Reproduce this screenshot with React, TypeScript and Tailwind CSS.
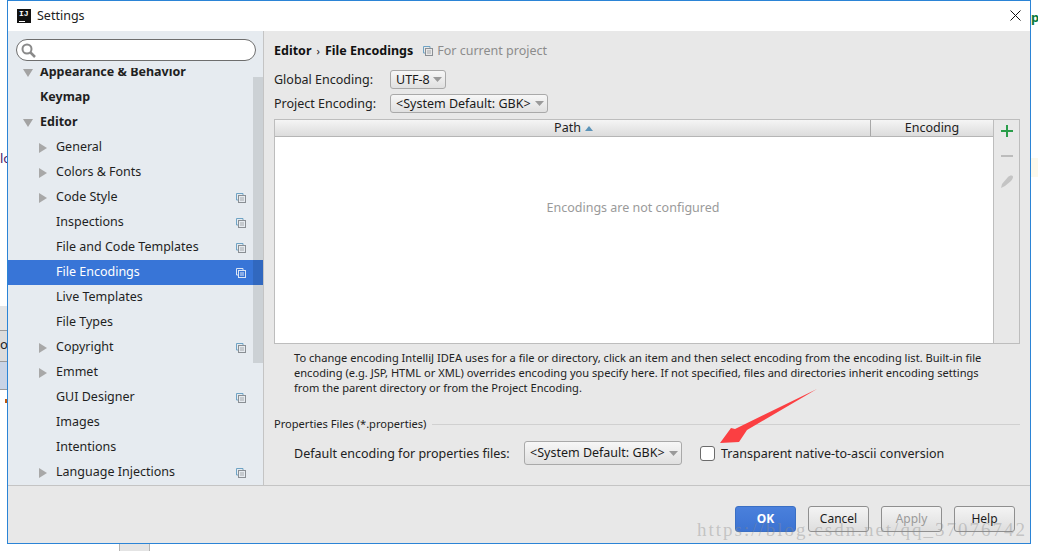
const items = [
  { label: 'General', arrow: true },
  { label: 'Colors & Fonts', arrow: true },
  { label: 'Code Style', arrow: true, copy: true },
  { label: 'Inspections', copy: true },
  { label: 'File and Code Templates', copy: true },
  { label: 'File Encodings', copy: true, active: true },
  { label: 'Live Templates' },
  { label: 'File Types' },
  { label: 'Copyright', arrow: true, copy: true },
  { label: 'Emmet', arrow: true },
  { label: 'GUI Designer', copy: true },
  { label: 'Images' },
  { label: 'Intentions' },
  { label: 'Language Injections', arrow: true, copy: true },
]

function CopyIcon({ active, className = '' }: { active?: boolean; className?: string }) {
  const c = active ? '#dce6f5' : '#6fa3c4'
  return (
    <svg width="10" height="10" viewBox="0 0 10 10" className={className}>
      <path d="M0.5 0.5h6.500v2M0.500 0.500v6.500h2" fill="none" stroke={c} />
      <rect x="2.500" y="2.500" width="7" height="7" fill="none" stroke={active ? c : '#8a8f94'} />
      <path d="M4 5h4M4 7h4" stroke={active ? c : '#a5a9ad'} />
    </svg>
  )
}

function Combo({ label, className = '' }: { label: string; className?: string }) {
  return (
    <div className={`flex items-center justify-between rounded-[3px] border border-[#a9a9a9] bg-gradient-to-b from-[#f7f7f7] to-[#e0e0e0] pl-[5px] pr-[3px] text-[12.5px] text-[#1a1a1a] ${className}`}>
      <span className="whitespace-nowrap pt-[1px]">{label}</span>
      <svg width="9" height="5" viewBox="0 0 9 5" className="shrink-0">
        <path d="M0 0h9L4.500 5z" fill="#9a9a9a" />
      </svg>
    </div>
  )
}

function DialogButton({ label, disabled, primary }: { label: string; disabled?: boolean; primary?: boolean }) {
  if (primary) {
    return (
      <div className="flex h-[26px] w-[61px] items-center justify-center rounded-[3px] border border-[#3a6fc4] bg-gradient-to-b from-[#4a80dc] to-[#3c73d2] text-[12px] font-bold text-white">
        {label}
      </div>
    )
  }
  return (
    <div className={`flex h-[26px] w-[61px] items-center justify-center rounded-[3px] border border-[#8f8f8f] bg-gradient-to-b from-[#f4f4f4] to-[#dedede] text-[12px] ${disabled ? 'text-[#9a9a9a]' : 'text-[#1a1a1a]'}`}>
      {label}
    </div>
  )
}

export default function App() {
  return (
    <div className="relative h-[551px] w-[1038px] overflow-hidden bg-white font-['Noto_Sans',sans-serif]">
      {/* bits of the IDE window behind the dialog */}
      <div className="absolute left-0 top-[151px] text-[13px] leading-[14px] text-[#4a1a6a]">lo</div>
      <div className="absolute left-0 top-[306px] h-[24px] w-[8px] bg-[#e4e4e4]"></div>
      <div className="absolute left-0 top-[330px] h-[32px] w-[8px] border-y border-[#9a9a9a] bg-[#dcdcdc] text-[13px] leading-[26px] text-[#222]">o</div>
      <div className="absolute left-0 top-[362px] h-[28px] w-[8px] border-b border-[#9a9a9a] bg-[#c9d4e6]"></div>
      <div className="absolute left-[5px] top-[399px] h-[4px] w-[2px] bg-[#c05a10]"></div>
      <div className="absolute bottom-0 left-[119px] h-[7px] w-[31px] border-x border-[#b5b5b5] bg-[#e4e4e4]"></div>
      <div className="absolute left-[1031px] top-[10px] text-[13px] font-bold leading-[14px] text-[#0a7a3a]">p.</div>
      <div className="absolute left-[1031px] top-[158px] h-[19px] w-[7px] bg-[#fdf9ec]"></div>

      <div className="absolute left-[7px] top-0 flex h-[544px] w-[1024px] flex-col border border-[#2b84d6] bg-[#e8e8e8]">
        <div className="flex h-[30px] shrink-0 items-center bg-white pl-[9px] pr-[9px]">
          <div className="relative h-[14px] w-[14px] bg-[#111]">
            <span className="absolute left-[2px] top-[1px] font-['Liberation_Mono',monospace] text-[8px] font-bold leading-[8px] text-white">IJ</span>
            <span className="absolute bottom-[1px] left-[2px] h-px w-[6px] bg-white"></span>
          </div>
          <span className="ml-[6px] text-[12.5px] text-[#222]">Settings</span>
          <svg width="11" height="11" viewBox="0 0 11 11" className="ml-auto mb-[2px]">
            <path d="M0.500 0.500l10 10M10.500 0.500l-10 10" stroke="#111" strokeWidth="1" fill="none" />
          </svg>
        </div>

        <div className="flex min-h-0 flex-1 border-b border-[#c4c4c4]">
          <aside className="flex w-[256px] shrink-0 flex-col border-r border-[#c4c4c4] bg-[#e6ebf0]">
            <div className="px-[8px] pb-[7px] pt-[8px]">
              <div className="flex h-[22px] w-[240px] items-center rounded-full border border-[#6e6e6e] bg-white pl-[4px]">
                <svg width="15" height="15" viewBox="0 0 15 15">
                  <circle cx="6" cy="6" r="4.500" fill="none" stroke="#8a8a8a" strokeWidth="2" />
                  <path d="M9.500 9.500l4.500 4.500" stroke="#8a8a8a" strokeWidth="2.500" />
                </svg>
              </div>
            </div>
            <div className="relative min-h-0 flex-1 overflow-hidden">
              <div className="-mt-[8px] text-[12.5px] text-[#1f1f1f]">
                <div className="flex h-[25px] items-center pl-[15px] font-bold">
                  <svg width="10" height="8" viewBox="0 0 10 8" className="mr-[7px]">
                    <path d="M0 0h10L5 8z" fill="#a3a3a3" />
                  </svg>
                  Appearance &amp; Behavior
                </div>
                <div className="flex h-[25px] items-center pl-[32px] font-bold">Keymap</div>
                <div className="flex h-[25px] items-center pl-[15px] font-bold">
                  <svg width="10" height="8" viewBox="0 0 10 8" className="mr-[7px]">
                    <path d="M0 0h10L5 8z" fill="#a3a3a3" />
                  </svg>
                  Editor
                </div>
                {items.map(item => (
                  <div key={item.label} className={`relative flex h-[25px] items-center pl-[31px] pr-[17px] ${item.active ? 'bg-[#3875d7] text-white' : ''}`}>
                    {item.arrow && (
                      <svg width="8" height="10" viewBox="0 0 8 10" className="absolute left-[31px]">
                        <path d="M0 0v10l8-5z" fill="#a8a8a8" />
                      </svg>
                    )}
                    <span className="ml-[17px] whitespace-nowrap">{item.label}</span>
                    {item.copy && <CopyIcon active={item.active} className="ml-auto" />}
                  </div>
                ))}
              </div>
              <div className="absolute right-0 top-[9px] h-[286px] w-[10px] bg-black/[0.11]"></div>
            </div>
          </aside>

          <main className="flex min-w-0 flex-1 flex-col pl-[10px] pr-[10px] text-[12.5px] text-[#222]">
            <div className="mt-[11px] flex h-[18px] items-center">
              <span className="font-bold text-[#111]">Editor</span>
              <span className="mx-[5px] text-[11px]">›</span>
              <span className="font-bold text-[#111]">File Encodings</span>
              <CopyIcon className="ml-[10px]" />
              <span className="ml-[4px] text-[#8c8c8c]">For current project</span>
            </div>
            <div className="mt-[10px] flex h-[19px] items-center">
              <span className="w-[116px] pt-[2px]">Global Encoding:</span>
              <Combo label="UTF-8" className="h-[19px] w-[56px]" />
            </div>
            <div className="mt-[5px] flex h-[19px] items-center">
              <span className="w-[116px] pt-[2px]">Project Encoding:</span>
              <Combo label="<System Default: GBK>" className="h-[19px] w-[158px]" />
            </div>

            <div className="mt-[6px] flex h-[225px] shrink-0">
              <div className="flex w-[720px] flex-col border border-[#bdbdbd] bg-white">
                <div className="flex h-[17px] shrink-0 border-b border-[#b5b5b5] bg-gradient-to-b from-[#f5f5f5] to-[#dcdcdc] leading-[16px]">
                  <div className="flex flex-1 items-center justify-center pl-[2px]">
                    Path
                    <svg width="8" height="5" viewBox="0 0 8 5" className="ml-[4px]">
                      <path d="M4 0l4 5H0z" fill="#5b93b8" />
                    </svg>
                  </div>
                  <div className="flex w-[123px] items-center justify-center border-l border-[#a8a8a8]">Encoding</div>
                </div>
                <div className="flex flex-1 justify-center pr-[2px] pt-[61px] leading-[20px] text-[#9a9a9a]">Encodings are not configured</div>
              </div>
              <div className="flex w-[26px] flex-col items-center border-y border-r border-[#bdbdbd] pt-[5px]">
                <svg width="12" height="12" viewBox="0 0 12 12">
                  <path d="M6 0v12M0 6h12" stroke="#2a9d4a" strokeWidth="2" />
                </svg>
                <svg width="12" height="2" viewBox="0 0 12 2" className="mt-[18px]">
                  <path d="M0 1h12" stroke="#bcbcbc" strokeWidth="2" />
                </svg>
                <svg width="12" height="13" viewBox="0 0 12 13" className="mt-[18px]">
                  <path d="M0 13l1-4 6-7c2-2 5-2 5 0 0 1-1 3-2 4l-6 5z" fill="#c4c4c4" />
                </svg>
              </div>
            </div>

            <p className="mt-[6px] w-[730px] pl-[20px] text-[11.1px] leading-[15px] text-[#222]">
              To change encoding IntelliJ IDEA uses for a file or directory, click an item and then select encoding from the encoding list. Built-in file encoding (e.g. JSP, HTML or XML) overrides encoding you specify here. If not specified, files and directories inherit encoding settings from the parent directory or from the Project Encoding.
            </p>

            <div className="mt-[21px] flex items-center text-[11.1px] leading-[16px]">
              <span>Properties Files (*.properties)</span>
              <div className="ml-[6px] h-px flex-1 bg-[#d0d0d0]"></div>
            </div>
            <div className="mt-[9px] flex h-[24px] items-center pl-[20px]">
              <span className="w-[230px] pt-[2px]">Default encoding for properties files:</span>
              <Combo label="<System Default: GBK>" className="h-[24px] w-[158px]" />
              <div className="ml-[18px] h-[15px] w-[15px] rounded-[3px] border border-[#6b6b6b] bg-white"></div>
              <span className="ml-[6px] pt-[2px]">Transparent native-to-ascii conversion</span>
            </div>
          </main>
        </div>

        <div className="flex h-[57px] shrink-0 items-start justify-end gap-[12px] pr-[15px] pt-[20px]">
          <DialogButton label="OK" primary />
          <DialogButton label="Cancel" />
          <DialogButton label="Apply" disabled />
          <DialogButton label="Help" />
        </div>
      </div>

      {/* annotation arrow added on top of the screenshot */}
      <svg width="100" height="60" viewBox="0 0 100 60" className="absolute left-[720px] top-[388px]">
        <path d="M97 1L27 42 19 54 0 55 11 40 15 41z" fill="#fb3f42" />
      </svg>

      {/* blog watermark */}
      <div className="pointer-events-none absolute left-[697px] top-[519px] whitespace-nowrap font-['Liberation_Serif',serif] text-[19px] leading-[22px] tracking-[2px] text-[#8a8a8a]/40">
        https://blog.csdn.net/qq_37076742
      </div>
    </div>
  )
}
